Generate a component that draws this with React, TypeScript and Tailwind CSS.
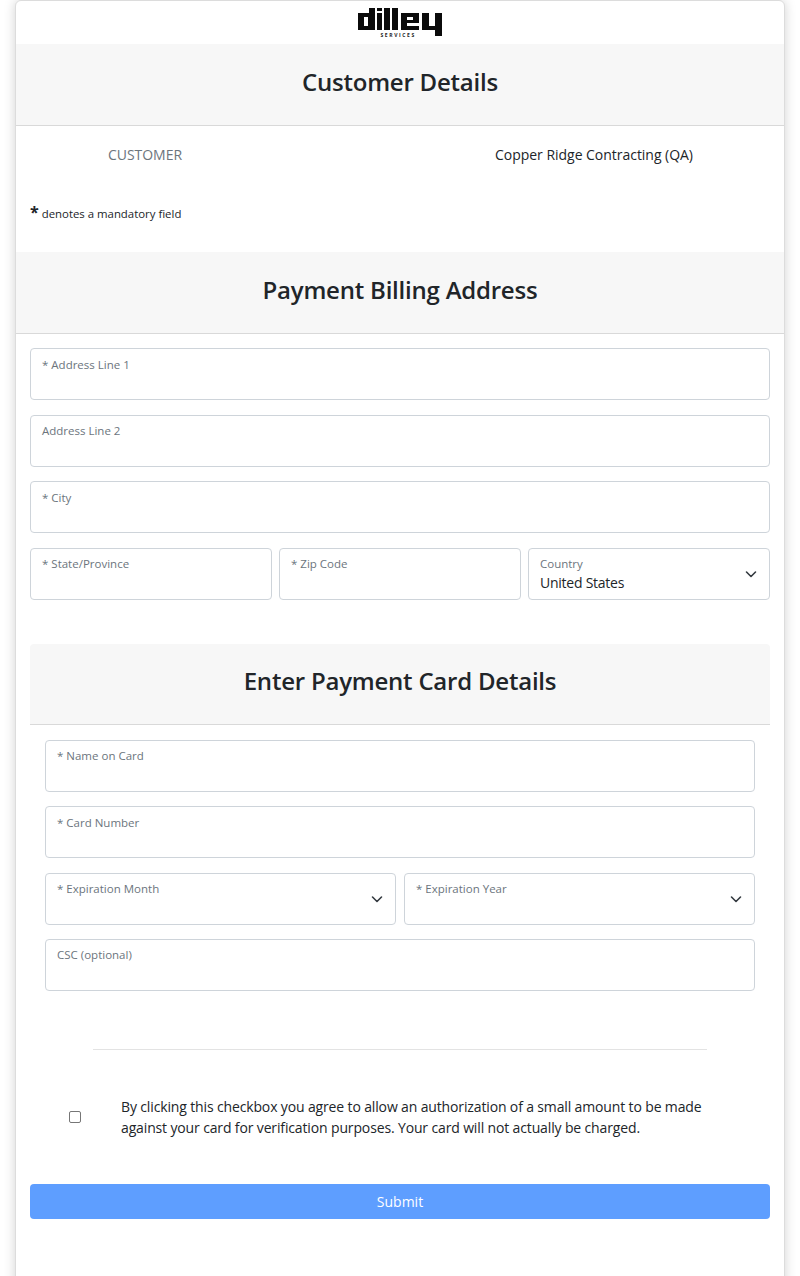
const font = { fontFamily: '"Open Sans", "Noto Sans", sans-serif' };

function DilleyLogo() {
  return (
    <div className="relative h-[43px] w-[85px]">
      <svg width="85" height="29" viewBox="0 0 85 29" className="absolute left-0 top-[7px]" fill="#0b0b0b">
        {/* d */}
        <path d="M0 5h11V0h6v22H0zM6 9v9h4V9z" fillRule="evenodd" />
        {/* i */}
        <rect x="19" y="0" width="5" height="3" />
        <rect x="19" y="5" width="5" height="17" />
        {/* l l */}
        <rect x="26" y="0" width="6" height="22" />
        <rect x="34" y="0" width="6" height="22" />
        {/* e */}
        <path d="M43 5h18v10H49v3h12v4H43zM49 9v3h6V9z" fillRule="evenodd" />
        {/* y */}
        <path d="M64 5h7v13h6V5h7v23h-7v-6H64z" />
      </svg>
      <span className="absolute left-[23px] top-[31px] text-[5px] leading-[6px] font-bold tracking-[1.6px] whitespace-nowrap text-[#222]">SERVICES</span>
    </div>
  );
}

function Chevron() {
  return (
    <svg width="14" height="14" viewBox="0 0 14 14" fill="none" stroke="#343a40" strokeWidth="1.6" strokeLinecap="round" strokeLinejoin="round" className="shrink-0">
      <path d="M2.5 5l4.5 4.5L11.5 5" />
    </svg>
  );
}

function Field({ label, value, select, className = "" }: { label: string; value?: string; select?: boolean; className?: string }) {
  return (
    <div className={`flex h-[52px] items-center justify-between rounded border border-[#ced4da] bg-white pl-[11px] pr-[11px] ${className}`}>
      <div className="flex h-full flex-col justify-start pt-[7.5px]">
        <div className="text-[11.5px] leading-[16px] text-[#6c757d]">{label}</div>
        {value && <div className="mt-[1px] text-[14px] leading-[20px] tracking-[-0.25px] text-[#212529]">{value}</div>}
      </div>
      {select && <Chevron />}
    </div>
  );
}

function SectionHeader({ title, className = "" }: { title: string; className?: string }) {
  return (
    <div className={`flex items-center justify-center border-b border-[#d9d9d9] bg-[#f7f7f7] pb-[7px] ${className}`}>
      <h2 className="text-[24px] font-semibold leading-[29px] tracking-[-0.22px] text-[#212529]">{title}</h2>
    </div>
  );
}

export default function App() {
  return (
    <div style={font} className="h-[1276px] overflow-hidden bg-white px-[15px]">
      <div className="h-[1300px] rounded-md border border-[#dcdcdc] bg-white shadow-[0_0_12px_rgba(0,0,0,0.18)]">
        <div className="flex h-[43px] justify-center">
          <DilleyLogo />
        </div>
        <SectionHeader title="Customer Details" className="h-[82px]" />

        <div className="flex h-[57px] items-center text-[14px] tracking-[-0.03px]">
          <div className="w-[258px] text-center text-[#6c757d]">CUSTOMER</div>
          <div className="ml-[220px] w-[200px] text-center whitespace-nowrap text-[#212529]">Copper Ridge Contracting (QA)</div>
        </div>

        <p className="mt-[21px] pl-[14px] text-[11.4px] leading-[20px] text-[#212529]">
          <span className="text-[16px] font-bold leading-[16px]">*</span> denotes a mandatory field
        </p>

        <SectionHeader title="Payment Billing Address" className="mt-[28px] h-[82px]" />

        <div className="flex flex-col gap-[14.6px] px-[14px] pt-[14px]">
          <Field label="* Address Line 1" />
          <Field label="Address Line 2" />
          <Field label="* City" />
          <div className="grid grid-cols-3 gap-[7px]">
            <Field label="* State/Province" />
            <Field label="* Zip Code" />
            <Field label="Country" value="United States" select />
          </div>
        </div>

        <div className="mx-[14px] mt-[44px]">
          <SectionHeader title="Enter Payment Card Details" className="h-[81px] rounded-t" />
          <div className="flex flex-col gap-[14.4px] px-[15px] pt-[15px]">
            <Field label="* Name on Card" />
            <Field label="* Card Number" />
            <div className="grid grid-cols-2 gap-[8px]">
              <Field label="* Expiration Month" select />
              <Field label="* Expiration Year" select />
            </div>
            <Field label="CSC (optional)" />
          </div>
        </div>

        <hr className="mx-[77px] mt-[58px] border-t border-[#e3e3e3]" />

        <div className="mt-[46px] flex items-center">
          <div className="flex w-[105px] justify-center pl-[13px]">
            <span className="h-[12px] w-[12px] rounded-[2px] border border-[#767676] bg-white" />
          </div>
          <p className="w-[600px] text-[14px] leading-[21px] tracking-[-0.14px] text-[#212529]">
            By clicking this checkbox you agree to allow an authorization of a small amount to be made against your card for verification purposes. Your card will not actually be charged.
          </p>
        </div>

        <div className="mx-[14px] mt-[46px] flex h-[35px] items-center justify-center rounded bg-[#5e9eff] text-[14px] font-medium text-white">
          Submit
        </div>
      </div>
    </div>
  );
}
